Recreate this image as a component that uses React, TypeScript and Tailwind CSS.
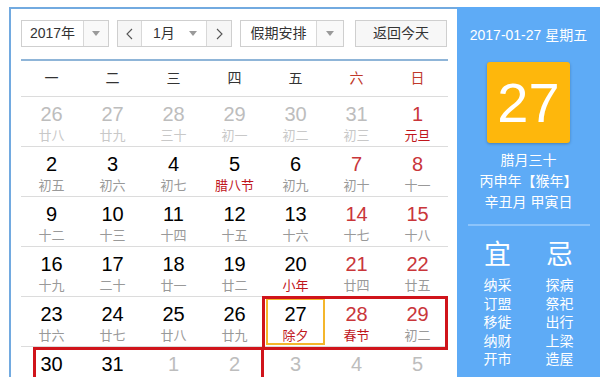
import React from 'react';

type Day = {
  n: number;
  lunar?: string;
  dim?: boolean; // not in this month
  red?: boolean; // weekend / holiday number
  fest?: boolean; // festival text in red
  today?: boolean;
};

const weekNames = ['一', '二', '三', '四', '五', '六', '日'];

const rows: Day[][] = [
  [
    { n: 26, lunar: '廿八', dim: true },
    { n: 27, lunar: '廿九', dim: true },
    { n: 28, lunar: '三十', dim: true },
    { n: 29, lunar: '初一', dim: true },
    { n: 30, lunar: '初二', dim: true },
    { n: 31, lunar: '初三', dim: true },
    { n: 1, lunar: '元旦', red: true, fest: true },
  ],
  [
    { n: 2, lunar: '初五' },
    { n: 3, lunar: '初六' },
    { n: 4, lunar: '初七' },
    { n: 5, lunar: '腊八节', fest: true },
    { n: 6, lunar: '初九' },
    { n: 7, lunar: '初十', red: true },
    { n: 8, lunar: '十一', red: true },
  ],
  [
    { n: 9, lunar: '十二' },
    { n: 10, lunar: '十三' },
    { n: 11, lunar: '十四' },
    { n: 12, lunar: '十五' },
    { n: 13, lunar: '十六' },
    { n: 14, lunar: '十七', red: true },
    { n: 15, lunar: '十八', red: true },
  ],
  [
    { n: 16, lunar: '十九' },
    { n: 17, lunar: '二十' },
    { n: 18, lunar: '廿一' },
    { n: 19, lunar: '廿二' },
    { n: 20, lunar: '小年', fest: true },
    { n: 21, lunar: '廿四', red: true },
    { n: 22, lunar: '廿五', red: true },
  ],
  [
    { n: 23, lunar: '廿六' },
    { n: 24, lunar: '廿七' },
    { n: 25, lunar: '廿八' },
    { n: 26, lunar: '廿九' },
    { n: 27, lunar: '除夕', fest: true, today: true },
    { n: 28, lunar: '春节', red: true, fest: true },
    { n: 29, lunar: '初二', red: true },
  ],
  // last row: the lunar line falls below the visible area
  [
    { n: 30 },
    { n: 31 },
    { n: 1, dim: true },
    { n: 2, dim: true },
    { n: 3, dim: true },
    { n: 4, dim: true },
    { n: 5, dim: true },
  ],
];

const yi = ['纳采', '订盟', '移徙', '纳财', '开市'];
const ji = ['探病', '祭祀', '出行', '上梁', '造屋'];

const Caret = () => (
  <span className="block w-0 h-0 border-l-[4px] border-r-[4px] border-t-[5px] border-l-transparent border-r-transparent border-t-[#9a9a9a]" />
);

const Chevron = ({ dir }: { dir: 'l' | 'r' }) => (
  <svg width="7" height="12" viewBox="0 0 7 12">
    <polyline
      points={dir === 'l' ? '6,1 1,6 6,11' : '1,1 6,6 1,11'}
      fill="none"
      stroke="#555"
      strokeWidth="1.1"
    />
  </svg>
);

const DayCell = ({ d }: { d: Day }) => {
  let numColor = 'text-black';
  if (d.dim) numColor = 'text-[#bdbdbd]';
  else if (d.red) numColor = 'text-[#c9363a]';

  let lunarColor = 'text-[#999]';
  if (d.dim) lunarColor = 'text-[#c8c8c8]';
  else if (d.fest) lunarColor = 'text-[#c0161c]';

  return (
    <div className="h-[50px] border-b border-[#dcdcdc] p-[1px]">
      <div
        className={
          'h-full flex flex-col items-center ' +
          (d.today ? 'border-2 border-[#f4b62c] pt-[1px]' : 'pt-[3px]')
        }
      >
        <span className={'text-[20px] leading-[26px] ' + numColor}>{d.n}</span>
        {d.lunar && <span className={'text-[13px] leading-[18px] ' + lunarColor}>{d.lunar}</span>}
      </div>
    </div>
  );
};

export default function App() {
  return (
    <div className="relative w-[608px] h-[377px] overflow-hidden bg-white font-['Liberation_Sans','Noto_Sans_CJK_SC',sans-serif] text-[#333]">
      <div className="ml-[9px] mt-[7px] w-[591px] h-[400px] border-l-2 border-t-2 border-[#72aae0] flex">
        {/* calendar side */}
        <div className="w-[446px] pl-[10px] pr-[9px] pt-[11px]">
          <div className="flex h-[27px] text-[14px]">
            <div className="w-[88px] flex border border-[#cfcfcf]">
              <div className="w-[61px] flex items-center justify-center">2017年</div>
              <div className="flex-1 flex items-center justify-center border-l border-[#d8d8d8] bg-[#f9f9f9]">
                <Caret />
              </div>
            </div>
            <div className="ml-[8px] w-[115px] flex border border-[#cfcfcf]">
              <div className="w-[24px] flex items-center justify-center bg-[#f6f6f6] border-r border-[#d8d8d8]">
                <Chevron dir="l" />
              </div>
              <div className="flex-1 flex items-center pl-[11px]">
                <span>1月</span>
                <span className="ml-[14px]">
                  <Caret />
                </span>
              </div>
              <div className="w-[25px] flex items-center justify-center bg-[#f6f6f6] border-l border-[#d8d8d8]">
                <Chevron dir="r" />
              </div>
            </div>
            <div className="ml-[8px] w-[104px] flex border border-[#cfcfcf]">
              <div className="w-[75px] flex items-center justify-center">假期安排</div>
              <div className="flex-1 flex items-center justify-center border-l border-[#d8d8d8] bg-[#f9f9f9]">
                <Caret />
              </div>
            </div>
            <button className="ml-[11px] w-[92px] border border-[#cfcfcf] bg-[#f7f7f7] flex items-center justify-center">
              返回今天
            </button>
          </div>

          <div className="mt-[12px] h-[38px] border-t-2 border-b border-t-[#8fb5d8] border-b-[#dcdcdc] grid grid-cols-7 items-center text-[14px] text-center">
            {weekNames.map((w, i) => (
              <span key={w} className={i >= 5 ? 'text-[#c0392b]' : 'text-[#333]'}>
                {w}
              </span>
            ))}
          </div>

          <div className="grid grid-cols-7 text-center">
            {rows.flat().map((d, i) => (
              <DayCell key={i} d={d} />
            ))}
          </div>
        </div>

        {/* info panel */}
        <div className="-mt-[2px] w-[143px] bg-[#5eabf6] text-white flex flex-col items-center pt-[18px]">
          <div className="text-[14px] leading-[20px]">2017-01-27 星期五</div>
          <div className="mt-[17px] w-[83px] h-[81px] rounded-[3px] bg-[#feb70c] shadow-[0_1px_3px_rgba(0,0,0,0.25)] flex items-center justify-center text-[56px] leading-none">
            27
          </div>
          <div className="mt-[7px] text-[14px] leading-[21px] text-center">
            <div>腊月三十</div>
            <div>丙申年【猴年】</div>
            <div>辛丑月 甲寅日</div>
          </div>
          <div className="mt-[11px] w-[122px] h-[2px] bg-[#8cc4fb]" />
          <div className="mt-[14px] flex gap-[34px]">
            <div className="flex flex-col items-center">
              <span className="text-[27px] leading-[30px]">宜</span>
              <div className="mt-[6px] text-[14px] leading-[18.5px] flex flex-col">
                {yi.map((t) => (
                  <span key={t}>{t}</span>
                ))}
              </div>
            </div>
            <div className="flex flex-col items-center">
              <span className="text-[27px] leading-[30px]">忌</span>
              <div className="mt-[6px] text-[14px] leading-[18.5px] flex flex-col">
                {ji.map((t) => (
                  <span key={t}>{t}</span>
                ))}
              </div>
            </div>
          </div>
        </div>
      </div>

      {/* holiday marks */}
      <div className="absolute left-[262px] top-[296px] w-[186px] h-[54px] border-[3px] border-[#d0141b]" />
      <div className="absolute left-[33px] top-[347px] w-[231px] h-[40px] border-[3px] border-[#d0141b]" />
    </div>
  );
}
